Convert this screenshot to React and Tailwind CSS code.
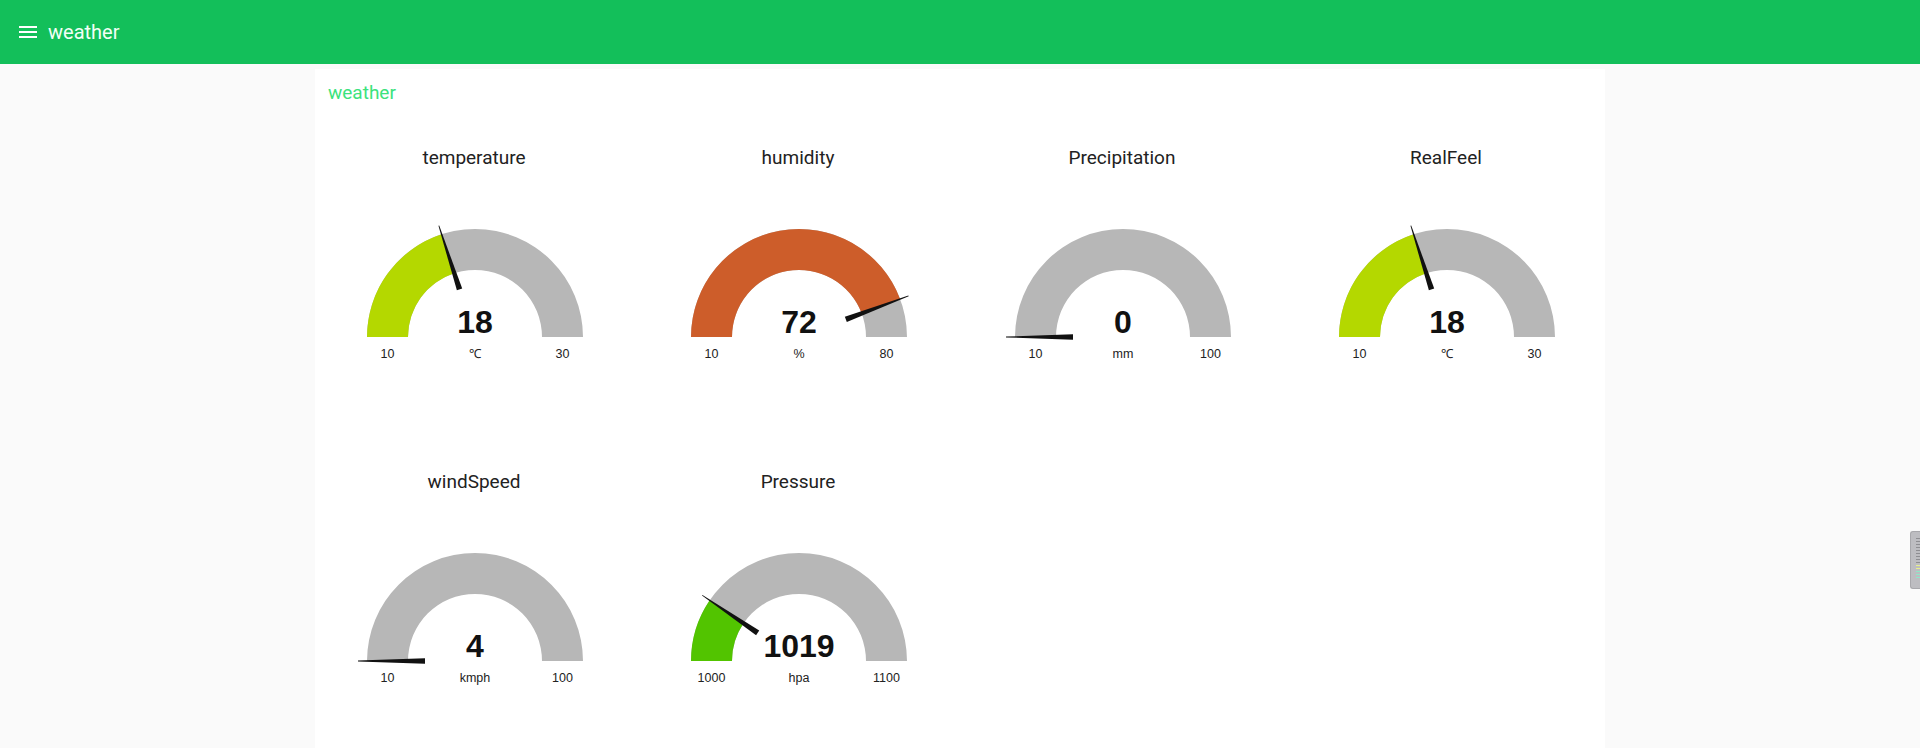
import React from "react";

const gauges = [
  { title: "temperature", value: 18, min: 10, max: 30, unit: "℃", color: "#b4d800" },
  { title: "humidity", value: 72, min: 10, max: 80, unit: "%", color: "#cd5d2a" },
  { title: "Precipitation", value: 0, min: 10, max: 100, unit: "mm", color: "#b4d800" },
  { title: "RealFeel", value: 18, min: 10, max: 30, unit: "℃", color: "#b4d800" },
  { title: "windSpeed", value: 4, min: 10, max: 100, unit: "kmph", color: "#b4d800" },
  { title: "Pressure", value: 1019, min: 1000, max: 1100, unit: "hpa", color: "#52c400" },
];

// gauge geometry (svg coords)
const cx = 160;
const cy = 127;
const R = 108;
const r = 67;

const pt = (rad, t) => [cx - rad * Math.cos(t), cy - rad * Math.sin(t)];

const bandPath = (t) => {
  const [ox, oy] = pt(R, t);
  const [ix, iy] = pt(r, t);
  return `M ${cx - R} ${cy} A ${R} ${R} 0 0 1 ${ox} ${oy} L ${ix} ${iy} A ${r} ${r} 0 0 0 ${cx - r} ${cy} Z`;
};

const needlePoints = (t) => {
  const nx = Math.sin(t);
  const ny = -Math.cos(t);
  const [tx, ty] = pt(117, t);
  const [bx, by] = pt(50, t);
  return [
    [tx + nx * 0.4, ty + ny * 0.4],
    [bx + nx * 2.8, by + ny * 2.8],
    [bx - nx * 2.8, by - ny * 2.8],
    [tx - nx * 0.4, ty - ny * 0.4],
  ]
    .map((p) => p.join(","))
    .join(" ");
};

const Gauge = ({ title, value, min, max, unit, color }) => {
  const f = Math.min(1, Math.max(0, (value - min) / (max - min)));
  const t = f * Math.PI;
  return (
    <div className="w-[318px] h-[318px] flex flex-col">
      <div className="h-[104px] flex items-center justify-center text-[19px] text-[#222] font-['Roboto',sans-serif]">
        {title}
      </div>
      <svg width="318" height="214" viewBox="0 0 318 214">
        <path d={bandPath(Math.PI)} fill="#b7b7b7" />
        {f > 0 && <path d={bandPath(t)} fill={color} />}
        <text
          x={cx}
          y={cy - 4.5}
          textAnchor="middle"
          fontFamily="'Liberation Sans', Arial, sans-serif"
          fontWeight="bold"
          fontSize="32"
          fill="#111"
        >
          {value}
        </text>
        <g fontFamily="'Liberation Sans', Arial, sans-serif" fontSize="12.5" fill="#222" textAnchor="middle">
          <text x={cx - 87.5} y={cy + 20.5}>{min}</text>
          <text x={cx} y={cy + 20.5}>{unit}</text>
          <text x={cx + 87.5} y={cy + 20.5}>{max}</text>
        </g>
        <polygon points={needlePoints(t)} fill="#111" />
      </svg>
    </div>
  );
};

export default function App() {
  return (
    <div className="relative h-screen flex flex-col overflow-hidden bg-[#fafafa] font-['Roboto',sans-serif]">
      {/* toolbar */}
      <div className="h-16 shrink-0 bg-[#13bf5a] flex items-center pl-[19px]">
        <svg width="18" height="14" viewBox="0 0 18 14" className="mr-[11px] mt-[1px]">
          <rect x="0" y="0" width="18" height="2" fill="#fff" />
          <rect x="0" y="5" width="18" height="2" fill="#fff" />
          <rect x="0" y="10" width="18" height="2" fill="#fff" />
        </svg>
        <span className="text-[20px] text-[#f2fff6]">weather</span>
      </div>

      {/* dashboard */}
      <div className="flex-1 flex justify-center pt-[5px]">
        <div className="w-[1290px] h-full bg-white pt-[14px]">
          <div className="pl-[13px] text-[19px] leading-[20px] text-[#3ce27c]">weather</div>
          <div className="mt-[3px] grid grid-cols-[repeat(4,318px)] gap-[6px]">
            {gauges.map((g) => (
              <Gauge key={g.title} {...g} />
            ))}
          </div>
        </div>
      </div>

      {/* side handle */}
      <div className="absolute right-0 top-[531px] w-[10px] h-[58px] rounded-l-[3px] bg-[#bdbdc1] border border-r-0 border-[#a8a8ac] flex flex-col items-end pt-[6px] gap-[2px]">
        {Array.from({ length: 14 }).map((_, i) => (
          <div
            key={i}
            className={
              i < 9
                ? "w-[4px] h-[1px] bg-[#8e8e92]"
                : i < 11
                ? "w-[4px] h-[1px] bg-[#e6f08a]"
                : "w-[4px] h-[1px] bg-[#8ee8c8]"
            }
          />
        ))}
      </div>
    </div>
  );
}
